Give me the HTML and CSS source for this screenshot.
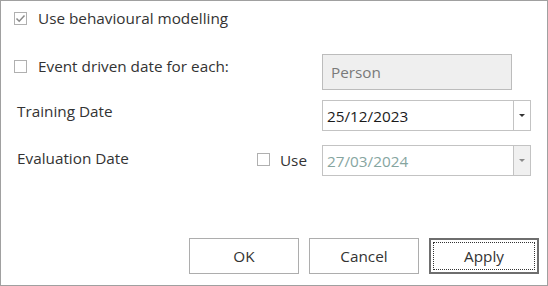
FILE: index.html
```html
<!DOCTYPE html>
<html>
<head>
<meta charset="UTF-8">
<title>Modelling options</title>
<link rel="stylesheet" href="styles.css">
</head>
<body>
	<div class="dialog">
		<div class="row row-first">
			<span class="check checked">
				<svg width="11" height="11" viewBox="0 0 11 11"><path d="M1.5 5.5 L4.2 8.2 L9.5 2.5" fill="none" stroke="#8a8a8a" stroke-width="1.5"/></svg>
			</span>
			<span class="check-label">Use behavioural modelling</span>
		</div>
		<div class="row row-event">
			<div class="left-col event-col">
				<span class="check"></span>
				<span class="check-label">Event driven date for each:</span>
			</div>
			<div class="readonly-box">Person</div>
		</div>
		<div class="row row-training">
			<div class="left-col">
				<span class="field-label">Training Date</span>
			</div>
			<div class="combo">
				<span class="combo-text">25/12/2023</span>
				<span class="combo-btn"><span class="arrow"></span></span>
			</div>
		</div>
		<div class="row row-eval">
			<div class="left-col eval-col">
				<span class="field-label">Evaluation Date</span>
				<span class="use-box">
					<span class="check"></span>
					<span class="use-label">Use</span>
				</span>
			</div>
			<div class="combo disabled">
				<span class="combo-text">27/03/2024</span>
				<span class="combo-btn"><span class="arrow"></span></span>
			</div>
		</div>
		<div class="buttons">
			<button class="btn">OK</button>
			<button class="btn">Cancel</button>
			<button class="btn default">Apply</button>
		</div>
	</div>
</body>
</html>
```

FILE: styles.css
```css
body {
	margin: 0;
	font-family: "Open Sans", "Noto Sans", sans-serif;
	font-size: 15.3px;
	color: #333333;
	background-color: #ffffff;
}

.dialog {
	width: 548px;
	height: 286px;
	box-sizing: border-box;
	border: 1px solid #a0a0a0;
	padding: 10px 8px 11px 13px;
	display: flex;
	flex-direction: column;
}

.row {
	display: flex;
	align-items: flex-start;
}

.row-first {
	align-items: center;
	height: 14px;
}

.row-event {
	margin-top: 29px;
}

.row-training {
	margin-top: 10px;
}

.row-eval {
	margin-top: 14px;
}

.left-col {
	width: 308px;
	display: flex;
	align-items: center;
}

.event-col {
	margin-top: 5px;
	height: 14px;
}

.check {
	width: 13px;
	height: 13px;
	box-sizing: border-box;
	border: 1px solid #b0b0b0;
	background-color: #ffffff;
	display: inline-flex;
	align-items: center;
	justify-content: center;
	flex: none;
}

.check-label {
	margin-left: 11px;
	line-height: 14px;
}

.field-label {
	padding-left: 3px;
	line-height: 20px;
	margin-top: 1px;
}

.eval-col {
	margin-top: 2px;
}

.use-box {
	display: flex;
	align-items: center;
	margin-left: auto;
	margin-right: 15px;
	margin-top: 4px;
}

.use-label {
	margin-left: 10px;
	line-height: 14px;
}

.readonly-box {
	width: 190px;
	height: 36px;
	box-sizing: border-box;
	border: 1px solid #bcbcbc;
	background-color: #efefef;
	color: #7a7a7a;
	padding-left: 8px;
	display: flex;
	align-items: center;
}

.combo {
	width: 209px;
	height: 31px;
	box-sizing: border-box;
	border: 1px solid #c3c3c3;
	background-color: #ffffff;
	display: flex;
}

.combo-text {
	flex: 1;
	padding-left: 4px;
	display: flex;
	align-items: center;
	color: #1a1a1a;
}

.combo-btn {
	width: 16px;
	border-left: 1px solid #c3c3c3;
	display: flex;
	align-items: center;
	justify-content: center;
}

.arrow {
	width: 0;
	height: 0;
	border-left: 3px solid transparent;
	border-right: 3px solid transparent;
	border-top: 3px solid #333333;
}

.combo.disabled .combo-text {
	color: #86a59f;
}

.combo.disabled .combo-btn {
	background-color: #f0f0f0;
}

.combo.disabled .arrow {
	border-top-color: #8a8a8a;
}

.buttons {
	margin-top: auto;
	display: flex;
	justify-content: flex-end;
	gap: 10px;
}

.btn {
	width: 110px;
	height: 36px;
	box-sizing: border-box;
	border: 1px solid #adadad;
	background-color: #ffffff;
	font-family: "Open Sans", "Noto Sans", sans-serif;
	font-size: 15.3px;
	color: #333333;
	padding: 0;
}

.btn.default {
	border: 2px solid #6e6e6e;
	outline: 1px dotted #333333;
	outline-offset: -5px;
}
```
